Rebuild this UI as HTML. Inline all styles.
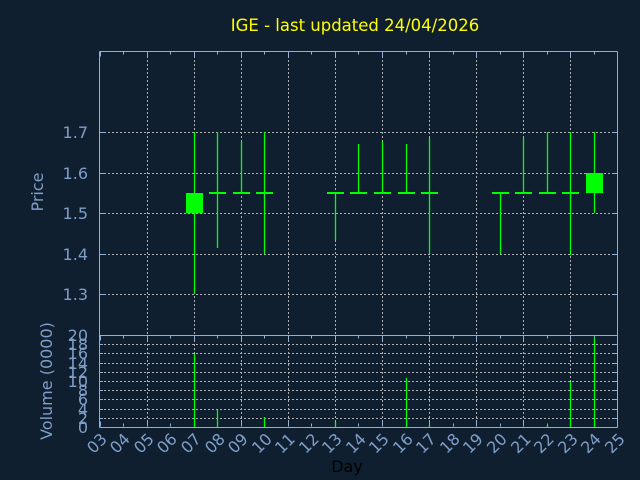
<!DOCTYPE html>
<html><head><meta charset="utf-8"><style>
html,body{margin:0;padding:0;background:#0f1f2f;}
svg{display:block}
text{font-family:"DejaVu Sans","Liberation Sans",sans-serif;}
.l{fill:#7f9fc8;font-size:16px}
</style></head><body>
<svg id="s" width="640" height="480" viewBox="0 0 640 480" xmlns="http://www.w3.org/2000/svg">
<rect width="640" height="480" fill="#0f1f2f"/>
<g id="g"></g>
<text x="355" y="31" fill="#ffff00" text-anchor="middle" style="font-size:16.5px">IGE - last updated 24/04/2026</text>
<g class="l" text-anchor="end">
<text x="88" y="138">1.7</text><text x="88" y="179">1.6</text><text x="88" y="219">1.5</text><text x="88" y="260">1.4</text><text x="88" y="300">1.3</text>
<text x="88" y="341">20</text><text x="88" y="350">18</text><text x="88" y="359">16</text><text x="88" y="369">14</text><text x="88" y="378">12</text><text x="88" y="387">10</text><text x="88" y="396">8</text><text x="88" y="405">6</text><text x="88" y="415">4</text><text x="88" y="424">2</text><text x="88" y="433">0</text>
</g>
<text class="l" transform="translate(43,192) rotate(-90)" text-anchor="middle">Price</text>
<text class="l" transform="translate(52,381) rotate(-90)" text-anchor="middle">Volume (0000)</text>
<text x="347" y="472" fill="#000" text-anchor="middle" style="font-size:16px">Day</text>
<g class="l" text-anchor="end">
<text transform="translate(108,440) rotate(-45)">03</text>
<text transform="translate(131,440) rotate(-45)">04</text>
<text transform="translate(155,440) rotate(-45)">05</text>
<text transform="translate(178,440) rotate(-45)">06</text>
<text transform="translate(202,440) rotate(-45)">07</text>
<text transform="translate(226,440) rotate(-45)">08</text>
<text transform="translate(249,440) rotate(-45)">09</text>
<text transform="translate(273,440) rotate(-45)">10</text>
<text transform="translate(296,440) rotate(-45)">11</text>
<text transform="translate(320,440) rotate(-45)">12</text>
<text transform="translate(343,440) rotate(-45)">13</text>
<text transform="translate(367,440) rotate(-45)">14</text>
<text transform="translate(390,440) rotate(-45)">15</text>
<text transform="translate(414,440) rotate(-45)">16</text>
<text transform="translate(437,440) rotate(-45)">17</text>
<text transform="translate(461,440) rotate(-45)">18</text>
<text transform="translate(484,440) rotate(-45)">19</text>
<text transform="translate(508,440) rotate(-45)">20</text>
<text transform="translate(532,440) rotate(-45)">21</text>
<text transform="translate(555,440) rotate(-45)">22</text>
<text transform="translate(579,440) rotate(-45)">23</text>
<text transform="translate(602,440) rotate(-45)">24</text>
<text transform="translate(626,440) rotate(-45)">25</text>
</g>
</svg>
<script>
var g=document.getElementById('g'),h='';
function X(d){return 99.5+(d-3)*23.545;}
function P(p){return 132-(p-1.7)*406;}
function V(v){return 427-v*4.6;}
function L(x1,y1,x2,y2,c,w,da){h+='<line x1="'+x1+'" y1="'+y1+'" x2="'+x2+'" y2="'+y2+'" stroke="'+c+'" stroke-width="'+(w||1)+'"'+(da?' stroke-dasharray="2,2"':'')+'/>';}
var gc='#b0b0b0',ac='#8fb0d8';
for(var d=5;d<=23;d+=2){var x=Math.round(X(d))+.5;L(x,52,x,427,gc,1,1);}
[1.7,1.6,1.5,1.4,1.3].forEach(function(p){var y=Math.round(P(p))+.5;L(100,y,617,y,gc,1,1);L(100,y,105,y,ac);L(612,y,617,y,ac);});
for(var v=2;v<=18;v+=2){var y=Math.round(V(v))+.5;L(100,y,617,y,gc,1,1);L(100,y,103,y,ac);L(614,y,617,y,ac);}
for(var d=3;d<=25;d++){var x=Math.round(X(d))+.5,t=(d%2)?5:3;L(x,51.5,x,51.5+t,ac);L(x,335.5,x,335.5+t,ac);L(x,426.5,x,426.5-t,ac);}
L(99.5,51.5,99.5,427.5,ac);L(617.5,51.5,617.5,427.5,ac);L(99.5,51.5,617.5,51.5,ac);L(99.5,335.5,617.5,335.5,ac);L(99.5,427.5,617.5,427.5,ac);
var G='#00ff00';
var c=[[7,132,294,'b',193,213],[8,132,248],[9,142,193],[10,132,254],[13,193,240],[14,144,193],[15,142,193],[16,144,193],[17,138,254],[20,193,254],[21,138,193],[22,132,193],[23,132,255],[24,132,213,'b',173,193]];
c.forEach(function(a){var x=Math.round(X(a[0]))+.5;L(x,a[1],x,a[2],G,1.3);
 if(a[3]=='b')h+='<rect x="'+(x-8.5)+'" y="'+a[4]+'" width="17" height="'+(a[5]-a[4])+'" fill="'+G+'"/>';
 else h+='<rect x="'+(x-8.5)+'" y="192" width="17" height="2" fill="'+G+'"/>';});
[[7,354],[8,410],[10,417],[13,422],[16,378],[17,425],[22,425],[23,382],[24,337]].forEach(function(a){var x=Math.round(X(a[0]))+.5;L(x,a[1],x,427,G,1.3);});
g.innerHTML=h;
</script>
</body></html>
